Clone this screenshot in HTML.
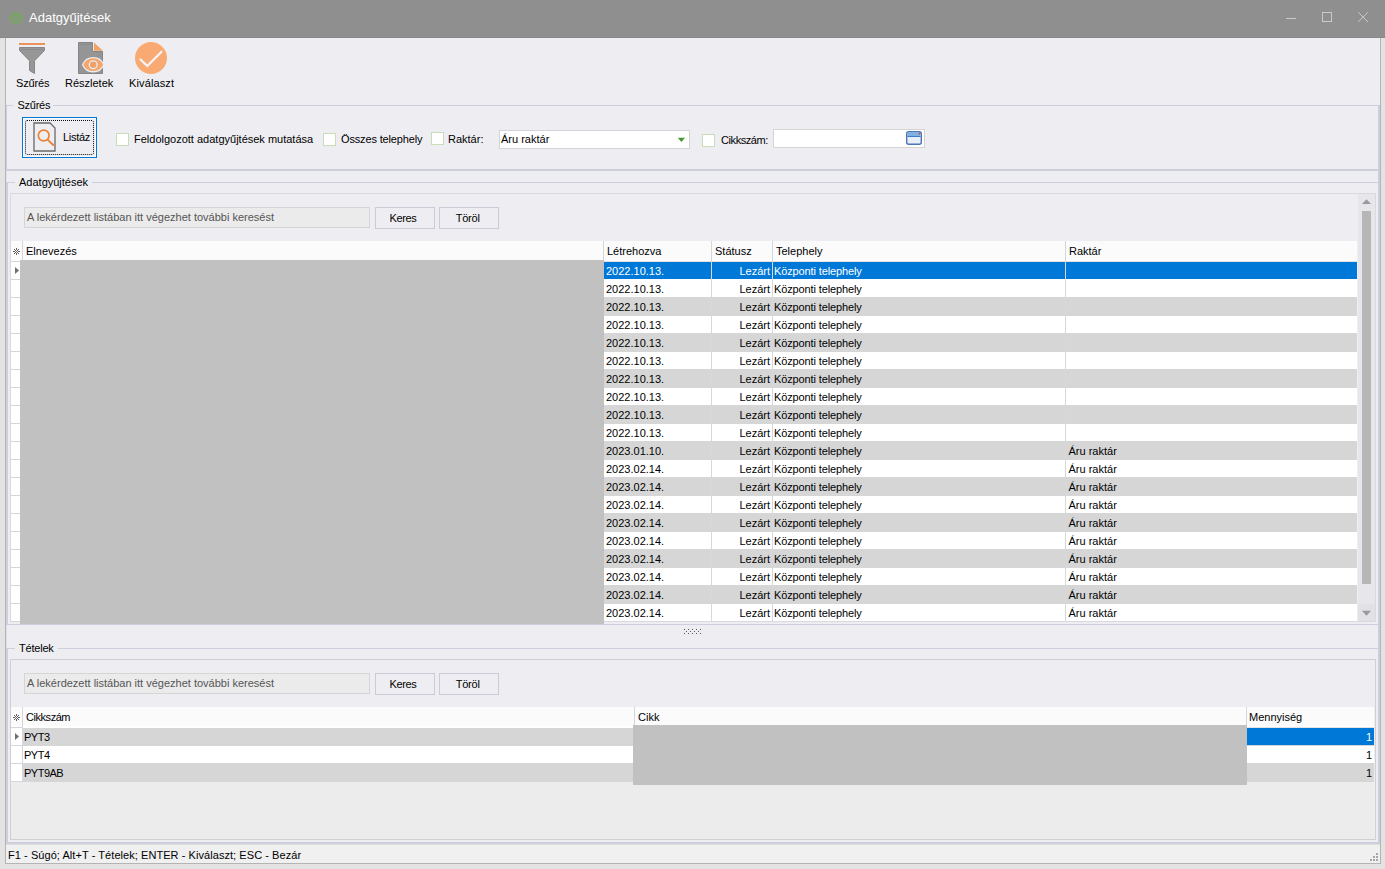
<!DOCTYPE html>
<html><head><meta charset="utf-8">
<style>
*{margin:0;padding:0;box-sizing:border-box}
html,body{width:1385px;height:869px;overflow:hidden}
body{position:relative;background:#e3e3e3;font-family:"Liberation Sans",sans-serif;font-size:11px;color:#1e1e1e}
.a{position:absolute}
.t{position:absolute;white-space:nowrap}
svg{position:absolute;overflow:visible}
</style></head><body>
<div class="a" style="left:0px;top:0px;width:1385px;height:37px;background:#8f8f8f;"></div>
<div class="a" style="left:0px;top:37px;width:1385px;height:1px;background:#898989;"></div>
<div class="a" style="left:5px;top:38px;width:1376px;height:826px;background:#b4b4b4;"></div>
<div class="a" style="left:6px;top:38px;width:1374px;height:825px;background:#eeeef2;"></div>
<svg style="left:0;top:0" width="40" height="37" viewBox="0 0 40 37">
<g fill="#6cb34a"><circle cx="14.6" cy="12.5" r="1"/><circle cx="17.6" cy="12.5" r="1"/>
<circle cx="10.1" cy="19.7" r="1"/><circle cx="22.1" cy="19.7" r="1"/>
<circle cx="11.5" cy="22.3" r="0.9"/><circle cx="20.5" cy="22.3" r="0.9"/></g>
<g fill="none" stroke="#6cb34a" stroke-width="1.4" stroke-linecap="round">
<path d="M11.9 14.2 Q16.2 17.6 20.6 14.1"/>
<path d="M10.3 16.5 Q14.5 17.2 14.5 23.3"/><path d="M21.9 16.5 Q17.6 17.2 17.5 23.3"/></g>
</svg>
<div class="t" style="left:29px;top:9.50px;font-size:13px;line-height:16px;height:16px;color:#ffffff;">Adatgyűjtések</div>
<svg style="left:1280px;top:8px" width="100" height="20" viewBox="0 0 100 20">
<g stroke="#cacaca" stroke-width="1" fill="none">
<path d="M6 10.5 H16"/>
<rect x="42.5" y="4.5" width="9" height="9"/>
<path d="M78.2 4.2 L88 14 M88 4.2 L78.2 14"/>
</g></svg>
<svg style="left:0;top:38px" width="200" height="40" viewBox="0 38 200 40">
<rect x="19" y="43" width="26" height="2" fill="#e8945a"/>
<path d="M19.5 47.5 H44.5 V50.5 L34.5 60.8 V73.5 L29.5 70.5 V60.8 L19.5 50.5 Z" fill="#979797" stroke="#868686" stroke-width="1"/><path d="M21 49.5 H43" stroke="#8a8a8a" stroke-width="1"/>
<path d="M78.5 42.5 H92.5 V51.5 H102.5 V73.5 H78.5 Z" fill="#959595" stroke="#858585" stroke-width="1"/><path d="M80.5 44.5 H90.5" stroke="#8a8a8a" stroke-width="1"/>
<path d="M94 42.5 L103 50.8 H94 Z" fill="#f2a266"/>
<path d="M82.6 64.7 C86.5 55.3 99.9 55.3 103.8 64.7 C99.9 74.1 86.5 74.1 82.6 64.7 Z" fill="#f5a56b" stroke="#e9ebf0" stroke-width="1.3"/>
<circle cx="93.2" cy="64.8" r="3.9" fill="#f0a068" stroke="#e8eef4" stroke-width="1.3"/>
<circle cx="151" cy="58" r="16" fill="#f8aa72"/>
<path d="M140.5 59.5 L147.3 66 L161.5 51.8" fill="none" stroke="#f4f4f8" stroke-width="2.3" stroke-linecap="round" stroke-linejoin="round"/>
</svg>
<div class="t" style="left:16px;top:76.69px;font-size:11px;line-height:13px;height:13px;color:#000000;letter-spacing:-0.17px">Szűrés</div>
<div class="t" style="left:65px;top:76.69px;font-size:11px;line-height:13px;height:13px;color:#000000;">Részletek</div>
<div class="t" style="left:129px;top:76.69px;font-size:11px;line-height:13px;height:13px;color:#000000;letter-spacing:0.13px">Kiválaszt</div>
<div class="a" style="left:6px;top:105px;width:7px;height:1px;background:#cdd0dc;"></div>
<div class="a" style="left:53px;top:105px;width:1325px;height:1px;background:#cdd0dc;"></div>
<div class="a" style="left:6px;top:105px;width:1px;height:65px;background:#cdd0dc;"></div>
<div class="a" style="left:1378px;top:105px;width:2px;height:739px;background:#cdd0dc;"></div>
<div class="a" style="left:6px;top:171px;width:1px;height:11px;background:#e2e4ec;"></div>
<div class="a" style="left:6px;top:169px;width:1372px;height:2px;background:#cdd0dc;"></div>
<div class="t" style="left:17.5px;top:98.69px;font-size:11px;line-height:13px;height:13px;color:#000000;letter-spacing:-0.25px">Szűrés</div>
<div class="a" style="left:22px;top:117px;width:75px;height:41px;background:#0078d7;"></div>
<div class="a" style="left:23px;top:118px;width:73px;height:39px;background:#fafafc;"></div>
<div class="a" style="left:24px;top:119px;width:71px;height:37px;background:#eeeef2;"></div>
<svg style="left:0;top:0" width="100" height="160" viewBox="0 0 100 160">
<rect x="25.5" y="120.5" width="68" height="34" rx="1.5" fill="none" stroke="#111" stroke-width="1" stroke-dasharray="1 1"/>
<path d="M34 123 H50 L55 128 V151 H34 Z" fill="none" stroke="#6a6a6a" stroke-width="1.3"/>
<circle cx="43.7" cy="135.5" r="5.4" fill="none" stroke="#ee8236" stroke-width="1.7"/>
<path d="M47.6 139.6 L53.2 145" stroke="#ee8236" stroke-width="1.9" stroke-linecap="round"/>
</svg>
<div class="t" style="left:63px;top:130.69px;font-size:11px;line-height:13px;height:13px;color:#000000;letter-spacing:-0.3px">Listáz</div>
<div class="a" style="left:116px;top:133px;width:13px;height:13px;background:#c6dfb9;"></div>
<div class="a" style="left:117px;top:134px;width:11px;height:11px;background:#ffffff;"></div>
<div class="a" style="left:323px;top:133px;width:13px;height:13px;background:#c6dfb9;"></div>
<div class="a" style="left:324px;top:134px;width:11px;height:11px;background:#ffffff;"></div>
<div class="a" style="left:431px;top:132px;width:13px;height:13px;background:#c6dfb9;"></div>
<div class="a" style="left:432px;top:133px;width:11px;height:11px;background:#ffffff;"></div>
<div class="a" style="left:702px;top:134px;width:13px;height:13px;background:#c6dfb9;"></div>
<div class="a" style="left:703px;top:135px;width:11px;height:11px;background:#ffffff;"></div>
<div class="t" style="left:134px;top:132.69px;font-size:11px;line-height:13px;height:13px;color:#000000;">Feldolgozott adatgyűjtések mutatása</div>
<div class="t" style="left:341px;top:132.69px;font-size:11px;line-height:13px;height:13px;color:#000000;letter-spacing:-0.15px">Összes telephely</div>
<div class="t" style="left:448px;top:132.69px;font-size:11px;line-height:13px;height:13px;color:#000000;">Raktár:</div>
<div class="t" style="left:721px;top:133.69px;font-size:11px;line-height:13px;height:13px;color:#000000;letter-spacing:-0.42px">Cikkszám:</div>
<div class="a" style="left:499px;top:130px;width:191px;height:19px;background:#d4d4d4;"></div>
<div class="a" style="left:500px;top:131px;width:189px;height:17px;background:#ffffff;"></div>
<div class="t" style="left:501px;top:132.69px;font-size:11px;line-height:13px;height:13px;color:#000000;">Áru raktár</div>
<svg style="left:0;top:0" width="700" height="150"><path d="M677.8 137.8 H685 L681.4 142 Z" fill="#459a2f"/></svg>
<div class="a" style="left:773px;top:129px;width:152px;height:19px;background:#d4d4d4;"></div>
<div class="a" style="left:774px;top:130px;width:150px;height:17px;background:#ffffff;"></div>
<svg style="left:0;top:0" width="930" height="150">
<rect x="906.7" y="131.7" width="14.6" height="12.6" rx="2" fill="#e8eef8" stroke="#4a76b6" stroke-width="1.4"/>
<rect x="907.5" y="132.5" width="13" height="3.6" fill="#7db0e3"/>
<rect x="907.5" y="136" width="13" height="1" fill="#3d79c4"/>
<circle cx="919.6" cy="133.5" r="0.9" fill="#e03a2a"/>
</svg>
<div class="a" style="left:6px;top:182px;width:9px;height:1px;background:#cdd0dc;"></div>
<div class="a" style="left:92px;top:182px;width:1286px;height:1px;background:#cdd0dc;"></div>
<div class="a" style="left:6px;top:182px;width:2px;height:442px;background:#cdd0dc;"></div>
<div class="a" style="left:6px;top:625px;width:1px;height:23px;background:#dcdfe8;"></div>
<div class="t" style="left:19px;top:175.69px;font-size:11px;line-height:13px;height:13px;color:#000000;">Adatgyűjtések</div>
<div class="a" style="left:10px;top:193px;width:1366px;height:429px;background:#d9d9de;"></div>
<div class="a" style="left:11px;top:194px;width:1364px;height:427px;background:#eeeef2;"></div>
<div class="a" style="left:24px;top:207px;width:346px;height:21px;background:#d5d5d5;"></div>
<div class="a" style="left:25px;top:208px;width:344px;height:19px;background:#ebebeb;"></div>
<div class="t" style="left:27px;top:210.69px;font-size:11px;line-height:13px;height:13px;color:#555555;">A lekérdezett listában itt végezhet további keresést</div>
<div class="a" style="left:375px;top:207px;width:60px;height:22px;background:#c9ccd6;"></div>
<div class="a" style="left:376px;top:208px;width:58px;height:20px;background:#eeeef2;"></div>
<div class="t" style="left:389.5px;top:211.69px;font-size:11px;line-height:13px;height:13px;color:#000000;letter-spacing:-0.35px">Keres</div>
<div class="a" style="left:439px;top:207px;width:60px;height:22px;background:#c9ccd6;"></div>
<div class="a" style="left:440px;top:208px;width:58px;height:20px;background:#eeeef2;"></div>
<div class="t" style="left:455.7px;top:211.69px;font-size:11px;line-height:13px;height:13px;color:#000000;letter-spacing:-0.2px">Töröl</div>
<div class="a" style="left:11px;top:241px;width:1346px;height:19px;background:#fbfbfc;"></div>
<div class="a" style="left:11px;top:260px;width:1346px;height:1px;background:#ffffff;"></div>
<div class="a" style="left:22px;top:241px;width:1px;height:20px;background:#d3d6e1;"></div>
<div class="a" style="left:603px;top:241px;width:1px;height:20px;background:#d3d6e1;"></div>
<div class="a" style="left:711px;top:241px;width:1px;height:20px;background:#d3d6e1;"></div>
<div class="a" style="left:772px;top:241px;width:1px;height:20px;background:#d3d6e1;"></div>
<div class="a" style="left:1065px;top:241px;width:1px;height:20px;background:#d3d6e1;"></div>
<svg style="left:0;top:0" width="30" height="258" shape-rendering="crispEdges"><g fill="#606060"><rect x="16" y="248" width="1" height="1"/><rect x="16" y="249" width="1" height="1"/><rect x="16" y="253" width="1" height="1"/><rect x="16" y="254" width="1" height="1"/><rect x="13" y="251" width="1" height="1"/><rect x="14" y="251" width="1" height="1"/><rect x="18" y="251" width="1" height="1"/><rect x="19" y="251" width="1" height="1"/><rect x="14" y="249" width="1" height="1"/><rect x="18" y="249" width="1" height="1"/><rect x="14" y="253" width="1" height="1"/><rect x="18" y="253" width="1" height="1"/><rect x="15" y="250" width="1" height="1"/><rect x="17" y="250" width="1" height="1"/><rect x="15" y="252" width="1" height="1"/><rect x="17" y="252" width="1" height="1"/><rect x="16" y="251" width="1" height="1"/></g></svg>
<div class="t" style="left:26px;top:244.69px;font-size:11px;line-height:13px;height:13px;color:#000000;">Elnevezés</div>
<div class="t" style="left:607px;top:244.69px;font-size:11px;line-height:13px;height:13px;color:#000000;">Létrehozva</div>
<div class="t" style="left:715px;top:244.69px;font-size:11px;line-height:13px;height:13px;color:#000000;">Státusz</div>
<div class="t" style="left:776px;top:244.69px;font-size:11px;line-height:13px;height:13px;color:#000000;">Telephely</div>
<div class="t" style="left:1069px;top:244.69px;font-size:11px;line-height:13px;height:13px;color:#000000;">Raktár</div>
<div class="a" style="left:21px;top:261px;width:1336px;height:360px;background:#ffffff;"></div>
<div class="a" style="left:11px;top:261px;width:10px;height:18px;background:#ffffff;"></div>
<div class="a" style="left:11px;top:261px;width:10px;height:1px;background:#d3d6e1;"></div>
<div class="a" style="left:21px;top:262px;width:1336px;height:17px;background:#0078d7;"></div>
<div class="a" style="left:604px;top:261px;width:753px;height:1px;background:#e6e1e4;"></div>
<div class="a" style="left:11px;top:279px;width:10px;height:18px;background:#ffffff;"></div>
<div class="a" style="left:11px;top:279px;width:10px;height:1px;background:#d3d6e1;"></div>
<div class="a" style="left:11px;top:297px;width:10px;height:18px;background:#ffffff;"></div>
<div class="a" style="left:11px;top:297px;width:10px;height:1px;background:#d3d6e1;"></div>
<div class="a" style="left:21px;top:297px;width:1336px;height:19px;background:#d6d6d6;"></div>
<div class="a" style="left:11px;top:315px;width:10px;height:18px;background:#ffffff;"></div>
<div class="a" style="left:11px;top:315px;width:10px;height:1px;background:#d3d6e1;"></div>
<div class="a" style="left:11px;top:333px;width:10px;height:18px;background:#ffffff;"></div>
<div class="a" style="left:11px;top:333px;width:10px;height:1px;background:#d3d6e1;"></div>
<div class="a" style="left:21px;top:333px;width:1336px;height:19px;background:#d6d6d6;"></div>
<div class="a" style="left:11px;top:351px;width:10px;height:18px;background:#ffffff;"></div>
<div class="a" style="left:11px;top:351px;width:10px;height:1px;background:#d3d6e1;"></div>
<div class="a" style="left:11px;top:369px;width:10px;height:18px;background:#ffffff;"></div>
<div class="a" style="left:11px;top:369px;width:10px;height:1px;background:#d3d6e1;"></div>
<div class="a" style="left:21px;top:369px;width:1336px;height:19px;background:#d6d6d6;"></div>
<div class="a" style="left:11px;top:387px;width:10px;height:18px;background:#ffffff;"></div>
<div class="a" style="left:11px;top:387px;width:10px;height:1px;background:#d3d6e1;"></div>
<div class="a" style="left:11px;top:405px;width:10px;height:18px;background:#ffffff;"></div>
<div class="a" style="left:11px;top:405px;width:10px;height:1px;background:#d3d6e1;"></div>
<div class="a" style="left:21px;top:405px;width:1336px;height:19px;background:#d6d6d6;"></div>
<div class="a" style="left:11px;top:423px;width:10px;height:18px;background:#ffffff;"></div>
<div class="a" style="left:11px;top:423px;width:10px;height:1px;background:#d3d6e1;"></div>
<div class="a" style="left:11px;top:441px;width:10px;height:18px;background:#ffffff;"></div>
<div class="a" style="left:11px;top:441px;width:10px;height:1px;background:#d3d6e1;"></div>
<div class="a" style="left:21px;top:441px;width:1336px;height:19px;background:#d6d6d6;"></div>
<div class="a" style="left:11px;top:459px;width:10px;height:18px;background:#ffffff;"></div>
<div class="a" style="left:11px;top:459px;width:10px;height:1px;background:#d3d6e1;"></div>
<div class="a" style="left:11px;top:477px;width:10px;height:18px;background:#ffffff;"></div>
<div class="a" style="left:11px;top:477px;width:10px;height:1px;background:#d3d6e1;"></div>
<div class="a" style="left:21px;top:477px;width:1336px;height:19px;background:#d6d6d6;"></div>
<div class="a" style="left:11px;top:495px;width:10px;height:18px;background:#ffffff;"></div>
<div class="a" style="left:11px;top:495px;width:10px;height:1px;background:#d3d6e1;"></div>
<div class="a" style="left:11px;top:513px;width:10px;height:18px;background:#ffffff;"></div>
<div class="a" style="left:11px;top:513px;width:10px;height:1px;background:#d3d6e1;"></div>
<div class="a" style="left:21px;top:513px;width:1336px;height:19px;background:#d6d6d6;"></div>
<div class="a" style="left:11px;top:531px;width:10px;height:18px;background:#ffffff;"></div>
<div class="a" style="left:11px;top:531px;width:10px;height:1px;background:#d3d6e1;"></div>
<div class="a" style="left:11px;top:549px;width:10px;height:18px;background:#ffffff;"></div>
<div class="a" style="left:11px;top:549px;width:10px;height:1px;background:#d3d6e1;"></div>
<div class="a" style="left:21px;top:549px;width:1336px;height:19px;background:#d6d6d6;"></div>
<div class="a" style="left:11px;top:567px;width:10px;height:18px;background:#ffffff;"></div>
<div class="a" style="left:11px;top:567px;width:10px;height:1px;background:#d3d6e1;"></div>
<div class="a" style="left:11px;top:585px;width:10px;height:18px;background:#ffffff;"></div>
<div class="a" style="left:11px;top:585px;width:10px;height:1px;background:#d3d6e1;"></div>
<div class="a" style="left:21px;top:585px;width:1336px;height:19px;background:#d6d6d6;"></div>
<div class="a" style="left:11px;top:603px;width:10px;height:18px;background:#ffffff;"></div>
<div class="a" style="left:11px;top:603px;width:10px;height:1px;background:#d3d6e1;"></div>
<div class="a" style="left:603px;top:261px;width:1px;height:360px;background:#d8d8d8;"></div>
<div class="a" style="left:711px;top:261px;width:1px;height:360px;background:#d8d8d8;"></div>
<div class="a" style="left:772px;top:261px;width:1px;height:360px;background:#d8d8d8;"></div>
<div class="a" style="left:1065px;top:261px;width:1px;height:360px;background:#d8d8d8;"></div>
<div class="t" style="left:606px;top:264.69px;font-size:11px;line-height:13px;height:13px;color:#ffffff;">2022.10.13.</div>
<div class="t" style="right:615px;top:264.69px;font-size:11px;line-height:13px;height:13px;color:#ffffff;">Lezárt</div>
<div class="t" style="left:774px;top:264.69px;font-size:11px;line-height:13px;height:13px;color:#ffffff;letter-spacing:-0.12px">Központi telephely</div>
<div class="t" style="left:606px;top:282.69px;font-size:11px;line-height:13px;height:13px;color:#000000;">2022.10.13.</div>
<div class="t" style="right:615px;top:282.69px;font-size:11px;line-height:13px;height:13px;color:#000000;">Lezárt</div>
<div class="t" style="left:774px;top:282.69px;font-size:11px;line-height:13px;height:13px;color:#000000;letter-spacing:-0.12px">Központi telephely</div>
<div class="t" style="left:606px;top:300.69px;font-size:11px;line-height:13px;height:13px;color:#000000;">2022.10.13.</div>
<div class="t" style="right:615px;top:300.69px;font-size:11px;line-height:13px;height:13px;color:#000000;">Lezárt</div>
<div class="t" style="left:774px;top:300.69px;font-size:11px;line-height:13px;height:13px;color:#000000;letter-spacing:-0.12px">Központi telephely</div>
<div class="t" style="left:606px;top:318.69px;font-size:11px;line-height:13px;height:13px;color:#000000;">2022.10.13.</div>
<div class="t" style="right:615px;top:318.69px;font-size:11px;line-height:13px;height:13px;color:#000000;">Lezárt</div>
<div class="t" style="left:774px;top:318.69px;font-size:11px;line-height:13px;height:13px;color:#000000;letter-spacing:-0.12px">Központi telephely</div>
<div class="t" style="left:606px;top:336.69px;font-size:11px;line-height:13px;height:13px;color:#000000;">2022.10.13.</div>
<div class="t" style="right:615px;top:336.69px;font-size:11px;line-height:13px;height:13px;color:#000000;">Lezárt</div>
<div class="t" style="left:774px;top:336.69px;font-size:11px;line-height:13px;height:13px;color:#000000;letter-spacing:-0.12px">Központi telephely</div>
<div class="t" style="left:606px;top:354.69px;font-size:11px;line-height:13px;height:13px;color:#000000;">2022.10.13.</div>
<div class="t" style="right:615px;top:354.69px;font-size:11px;line-height:13px;height:13px;color:#000000;">Lezárt</div>
<div class="t" style="left:774px;top:354.69px;font-size:11px;line-height:13px;height:13px;color:#000000;letter-spacing:-0.12px">Központi telephely</div>
<div class="t" style="left:606px;top:372.69px;font-size:11px;line-height:13px;height:13px;color:#000000;">2022.10.13.</div>
<div class="t" style="right:615px;top:372.69px;font-size:11px;line-height:13px;height:13px;color:#000000;">Lezárt</div>
<div class="t" style="left:774px;top:372.69px;font-size:11px;line-height:13px;height:13px;color:#000000;letter-spacing:-0.12px">Központi telephely</div>
<div class="t" style="left:606px;top:390.69px;font-size:11px;line-height:13px;height:13px;color:#000000;">2022.10.13.</div>
<div class="t" style="right:615px;top:390.69px;font-size:11px;line-height:13px;height:13px;color:#000000;">Lezárt</div>
<div class="t" style="left:774px;top:390.69px;font-size:11px;line-height:13px;height:13px;color:#000000;letter-spacing:-0.12px">Központi telephely</div>
<div class="t" style="left:606px;top:408.69px;font-size:11px;line-height:13px;height:13px;color:#000000;">2022.10.13.</div>
<div class="t" style="right:615px;top:408.69px;font-size:11px;line-height:13px;height:13px;color:#000000;">Lezárt</div>
<div class="t" style="left:774px;top:408.69px;font-size:11px;line-height:13px;height:13px;color:#000000;letter-spacing:-0.12px">Központi telephely</div>
<div class="t" style="left:606px;top:426.69px;font-size:11px;line-height:13px;height:13px;color:#000000;">2022.10.13.</div>
<div class="t" style="right:615px;top:426.69px;font-size:11px;line-height:13px;height:13px;color:#000000;">Lezárt</div>
<div class="t" style="left:774px;top:426.69px;font-size:11px;line-height:13px;height:13px;color:#000000;letter-spacing:-0.12px">Központi telephely</div>
<div class="t" style="left:606px;top:444.69px;font-size:11px;line-height:13px;height:13px;color:#000000;">2023.01.10.</div>
<div class="t" style="right:615px;top:444.69px;font-size:11px;line-height:13px;height:13px;color:#000000;">Lezárt</div>
<div class="t" style="left:774px;top:444.69px;font-size:11px;line-height:13px;height:13px;color:#000000;letter-spacing:-0.12px">Központi telephely</div>
<div class="t" style="left:1068.5px;top:444.69px;font-size:11px;line-height:13px;height:13px;color:#000000;">Áru raktár</div>
<div class="t" style="left:606px;top:462.69px;font-size:11px;line-height:13px;height:13px;color:#000000;">2023.02.14.</div>
<div class="t" style="right:615px;top:462.69px;font-size:11px;line-height:13px;height:13px;color:#000000;">Lezárt</div>
<div class="t" style="left:774px;top:462.69px;font-size:11px;line-height:13px;height:13px;color:#000000;letter-spacing:-0.12px">Központi telephely</div>
<div class="t" style="left:1068.5px;top:462.69px;font-size:11px;line-height:13px;height:13px;color:#000000;">Áru raktár</div>
<div class="t" style="left:606px;top:480.69px;font-size:11px;line-height:13px;height:13px;color:#000000;">2023.02.14.</div>
<div class="t" style="right:615px;top:480.69px;font-size:11px;line-height:13px;height:13px;color:#000000;">Lezárt</div>
<div class="t" style="left:774px;top:480.69px;font-size:11px;line-height:13px;height:13px;color:#000000;letter-spacing:-0.12px">Központi telephely</div>
<div class="t" style="left:1068.5px;top:480.69px;font-size:11px;line-height:13px;height:13px;color:#000000;">Áru raktár</div>
<div class="t" style="left:606px;top:498.69px;font-size:11px;line-height:13px;height:13px;color:#000000;">2023.02.14.</div>
<div class="t" style="right:615px;top:498.69px;font-size:11px;line-height:13px;height:13px;color:#000000;">Lezárt</div>
<div class="t" style="left:774px;top:498.69px;font-size:11px;line-height:13px;height:13px;color:#000000;letter-spacing:-0.12px">Központi telephely</div>
<div class="t" style="left:1068.5px;top:498.69px;font-size:11px;line-height:13px;height:13px;color:#000000;">Áru raktár</div>
<div class="t" style="left:606px;top:516.69px;font-size:11px;line-height:13px;height:13px;color:#000000;">2023.02.14.</div>
<div class="t" style="right:615px;top:516.69px;font-size:11px;line-height:13px;height:13px;color:#000000;">Lezárt</div>
<div class="t" style="left:774px;top:516.69px;font-size:11px;line-height:13px;height:13px;color:#000000;letter-spacing:-0.12px">Központi telephely</div>
<div class="t" style="left:1068.5px;top:516.69px;font-size:11px;line-height:13px;height:13px;color:#000000;">Áru raktár</div>
<div class="t" style="left:606px;top:534.69px;font-size:11px;line-height:13px;height:13px;color:#000000;">2023.02.14.</div>
<div class="t" style="right:615px;top:534.69px;font-size:11px;line-height:13px;height:13px;color:#000000;">Lezárt</div>
<div class="t" style="left:774px;top:534.69px;font-size:11px;line-height:13px;height:13px;color:#000000;letter-spacing:-0.12px">Központi telephely</div>
<div class="t" style="left:1068.5px;top:534.69px;font-size:11px;line-height:13px;height:13px;color:#000000;">Áru raktár</div>
<div class="t" style="left:606px;top:552.69px;font-size:11px;line-height:13px;height:13px;color:#000000;">2023.02.14.</div>
<div class="t" style="right:615px;top:552.69px;font-size:11px;line-height:13px;height:13px;color:#000000;">Lezárt</div>
<div class="t" style="left:774px;top:552.69px;font-size:11px;line-height:13px;height:13px;color:#000000;letter-spacing:-0.12px">Központi telephely</div>
<div class="t" style="left:1068.5px;top:552.69px;font-size:11px;line-height:13px;height:13px;color:#000000;">Áru raktár</div>
<div class="t" style="left:606px;top:570.69px;font-size:11px;line-height:13px;height:13px;color:#000000;">2023.02.14.</div>
<div class="t" style="right:615px;top:570.69px;font-size:11px;line-height:13px;height:13px;color:#000000;">Lezárt</div>
<div class="t" style="left:774px;top:570.69px;font-size:11px;line-height:13px;height:13px;color:#000000;letter-spacing:-0.12px">Központi telephely</div>
<div class="t" style="left:1068.5px;top:570.69px;font-size:11px;line-height:13px;height:13px;color:#000000;">Áru raktár</div>
<div class="t" style="left:606px;top:588.69px;font-size:11px;line-height:13px;height:13px;color:#000000;">2023.02.14.</div>
<div class="t" style="right:615px;top:588.69px;font-size:11px;line-height:13px;height:13px;color:#000000;">Lezárt</div>
<div class="t" style="left:774px;top:588.69px;font-size:11px;line-height:13px;height:13px;color:#000000;letter-spacing:-0.12px">Központi telephely</div>
<div class="t" style="left:1068.5px;top:588.69px;font-size:11px;line-height:13px;height:13px;color:#000000;">Áru raktár</div>
<div class="t" style="left:606px;top:606.69px;font-size:11px;line-height:13px;height:13px;color:#000000;">2023.02.14.</div>
<div class="t" style="right:615px;top:606.69px;font-size:11px;line-height:13px;height:13px;color:#000000;">Lezárt</div>
<div class="t" style="left:774px;top:606.69px;font-size:11px;line-height:13px;height:13px;color:#000000;letter-spacing:-0.12px">Központi telephely</div>
<div class="t" style="left:1068.5px;top:606.69px;font-size:11px;line-height:13px;height:13px;color:#000000;">Áru raktár</div>
<div class="a" style="left:11px;top:621px;width:10px;height:1px;background:#d3d6e1;"></div>
<div class="a" style="left:20px;top:260px;width:584px;height:364px;background:#c1c1c1;"></div>
<svg style="left:0;top:0" width="30" height="280"><path d="M15 267 L19 270.5 L15 274 Z" fill="#707070"/></svg>
<div class="a" style="left:1358px;top:194px;width:17px;height:427px;background:#e6e6eb;"></div>
<div class="a" style="left:1358px;top:604px;width:17px;height:17px;background:#e1e1e6;"></div>
<svg style="left:0;top:0" width="1385" height="625"><path d="M1362 204 L1366.5 199.2 L1371 204 Z" fill="#9a9a9a"/><path d="M1362 610.8 L1366.5 615.8 L1371 610.8 Z" fill="#9a9a9a"/></svg>
<div class="a" style="left:1362px;top:211px;width:9px;height:373px;background:#b6b6b6;"></div>
<div class="a" style="left:6px;top:624px;width:1372px;height:1px;background:#cdd0dc;"></div>
<svg style="left:0;top:0" width="710" height="640" shape-rendering="crispEdges"><g fill="#555555"><rect x="684" y="629" width="1" height="1"/><rect x="688" y="629" width="1" height="1"/><rect x="692" y="629" width="1" height="1"/><rect x="696" y="629" width="1" height="1"/><rect x="700" y="629" width="1" height="1"/><rect x="684" y="633" width="1" height="1"/><rect x="688" y="633" width="1" height="1"/><rect x="692" y="633" width="1" height="1"/><rect x="696" y="633" width="1" height="1"/><rect x="700" y="633" width="1" height="1"/><rect x="686" y="631" width="1" height="1"/><rect x="690" y="631" width="1" height="1"/><rect x="694" y="631" width="1" height="1"/><rect x="698" y="631" width="1" height="1"/></g></svg>
<div class="a" style="left:6px;top:648px;width:9px;height:1px;background:#cdd0dc;"></div>
<div class="a" style="left:58px;top:648px;width:1320px;height:1px;background:#cdd0dc;"></div>
<div class="a" style="left:6px;top:648px;width:2px;height:196px;background:#cdd0dc;"></div>
<div class="a" style="left:6px;top:842px;width:1372px;height:2px;background:#cdd0dc;"></div>
<div class="t" style="left:19px;top:641.69px;font-size:11px;line-height:13px;height:13px;color:#000000;letter-spacing:-0.2px">Tételek</div>
<div class="a" style="left:10px;top:659px;width:1366px;height:181px;background:#d0d0d0;"></div>
<div class="a" style="left:11px;top:660px;width:1364px;height:179px;background:#eeeef2;"></div>
<div class="a" style="left:24px;top:673px;width:346px;height:21px;background:#d5d5d5;"></div>
<div class="a" style="left:25px;top:674px;width:344px;height:19px;background:#ebebeb;"></div>
<div class="t" style="left:27px;top:676.69px;font-size:11px;line-height:13px;height:13px;color:#555555;">A lekérdezett listában itt végezhet további keresést</div>
<div class="a" style="left:375px;top:673px;width:60px;height:22px;background:#c9ccd6;"></div>
<div class="a" style="left:376px;top:674px;width:58px;height:20px;background:#eeeef2;"></div>
<div class="t" style="left:389.5px;top:677.69px;font-size:11px;line-height:13px;height:13px;color:#000000;letter-spacing:-0.35px">Keres</div>
<div class="a" style="left:439px;top:673px;width:60px;height:22px;background:#c9ccd6;"></div>
<div class="a" style="left:440px;top:674px;width:58px;height:20px;background:#eeeef2;"></div>
<div class="t" style="left:455.7px;top:677.69px;font-size:11px;line-height:13px;height:13px;color:#000000;letter-spacing:-0.2px">Töröl</div>
<div class="a" style="left:11px;top:707px;width:1363px;height:19px;background:#fbfbfc;"></div>
<div class="a" style="left:11px;top:726px;width:1363px;height:1px;background:#ffffff;"></div>
<div class="a" style="left:22px;top:707px;width:1px;height:20px;background:#d3d6e1;"></div>
<div class="a" style="left:634px;top:707px;width:1px;height:20px;background:#d3d6e1;"></div>
<div class="a" style="left:1246px;top:707px;width:1px;height:20px;background:#d3d6e1;"></div>
<svg style="left:0;top:0" width="30" height="724" shape-rendering="crispEdges"><g fill="#606060"><rect x="16" y="714" width="1" height="1"/><rect x="16" y="715" width="1" height="1"/><rect x="16" y="719" width="1" height="1"/><rect x="16" y="720" width="1" height="1"/><rect x="13" y="717" width="1" height="1"/><rect x="14" y="717" width="1" height="1"/><rect x="18" y="717" width="1" height="1"/><rect x="19" y="717" width="1" height="1"/><rect x="14" y="715" width="1" height="1"/><rect x="18" y="715" width="1" height="1"/><rect x="14" y="719" width="1" height="1"/><rect x="18" y="719" width="1" height="1"/><rect x="15" y="716" width="1" height="1"/><rect x="17" y="716" width="1" height="1"/><rect x="15" y="718" width="1" height="1"/><rect x="17" y="718" width="1" height="1"/><rect x="16" y="717" width="1" height="1"/></g></svg>
<div class="t" style="left:26px;top:710.69px;font-size:11px;line-height:13px;height:13px;color:#000000;letter-spacing:-0.45px">Cikkszám</div>
<div class="t" style="left:638px;top:710.69px;font-size:11px;line-height:13px;height:13px;color:#000000;">Cikk</div>
<div class="t" style="left:1249px;top:710.69px;font-size:11px;line-height:13px;height:13px;color:#000000;">Mennyiség</div>
<div class="a" style="left:22px;top:727px;width:612px;height:1px;background:#cbcedb;"></div>
<div class="a" style="left:11px;top:727px;width:1363px;height:112px;background:#ececec;"></div>
<div class="a" style="left:11px;top:727px;width:11px;height:18px;background:#ffffff;"></div>
<div class="a" style="left:11px;top:727px;width:11px;height:1px;background:#d3d6e1;"></div>
<div class="a" style="left:22px;top:727px;width:1352px;height:18px;background:#ffffff;"></div>
<div class="a" style="left:11px;top:745px;width:11px;height:18px;background:#ffffff;"></div>
<div class="a" style="left:11px;top:745px;width:11px;height:1px;background:#d3d6e1;"></div>
<div class="a" style="left:22px;top:745px;width:1352px;height:18px;background:#ffffff;"></div>
<div class="a" style="left:11px;top:763px;width:11px;height:18px;background:#ffffff;"></div>
<div class="a" style="left:11px;top:763px;width:11px;height:1px;background:#d3d6e1;"></div>
<div class="a" style="left:22px;top:763px;width:1352px;height:18px;background:#ffffff;"></div>
<div class="a" style="left:23px;top:728px;width:1351px;height:18px;background:#d6d6d6;"></div>
<div class="a" style="left:23px;top:763px;width:1351px;height:19px;background:#d6d6d6;"></div>
<div class="a" style="left:1247px;top:728px;width:127px;height:17px;background:#0078d7;"></div>
<div class="a" style="left:1247px;top:727px;width:127px;height:1px;background:#e6e1e4;"></div>
<div class="t" style="left:24px;top:730.69px;font-size:11px;line-height:13px;height:13px;color:#000000;letter-spacing:-0.5px">PYT3</div>
<div class="t" style="right:13px;top:730.69px;font-size:11px;line-height:13px;height:13px;color:#ffffff;">1</div>
<div class="t" style="left:24px;top:748.69px;font-size:11px;line-height:13px;height:13px;color:#000000;letter-spacing:-0.5px">PYT4</div>
<div class="t" style="right:13px;top:748.69px;font-size:11px;line-height:13px;height:13px;color:#000000;">1</div>
<div class="t" style="left:24px;top:766.69px;font-size:11px;line-height:13px;height:13px;color:#000000;letter-spacing:-0.5px">PYT9AB</div>
<div class="t" style="right:13px;top:766.69px;font-size:11px;line-height:13px;height:13px;color:#000000;">1</div>
<div class="a" style="left:11px;top:781px;width:11px;height:1px;background:#d3d6e1;"></div>
<div class="a" style="left:22px;top:727px;width:1px;height:55px;background:#d3d6e1;"></div>
<div class="a" style="left:633px;top:725px;width:614px;height:60px;background:#c1c1c1;"></div>
<svg style="left:0;top:0" width="30" height="745"><path d="M15 733 L19 736.5 L15 740 Z" fill="#707070"/></svg>
<div class="a" style="left:6px;top:844px;width:1374px;height:19px;background:#f0f0f0;"></div>
<div class="a" style="left:6px;top:844px;width:1374px;height:1px;background:#dddddd;"></div>
<div class="t" style="left:8px;top:848.69px;font-size:11px;line-height:13px;height:13px;color:#000000;letter-spacing:0.06px">F1 - Súgó; Alt+T - Tételek; ENTER - Kiválaszt; ESC - Bezár</div>
<svg style="left:0;top:0" width="1385" height="869"><g fill="#a8a8a8"><rect x="1376" y="853" width="2" height="2"/><rect x="1373" y="856" width="2" height="2"/><rect x="1376" y="856" width="2" height="2"/><rect x="1370" y="859" width="2" height="2"/><rect x="1373" y="859" width="2" height="2"/><rect x="1376" y="859" width="2" height="2"/></g></svg>
</body></html>
